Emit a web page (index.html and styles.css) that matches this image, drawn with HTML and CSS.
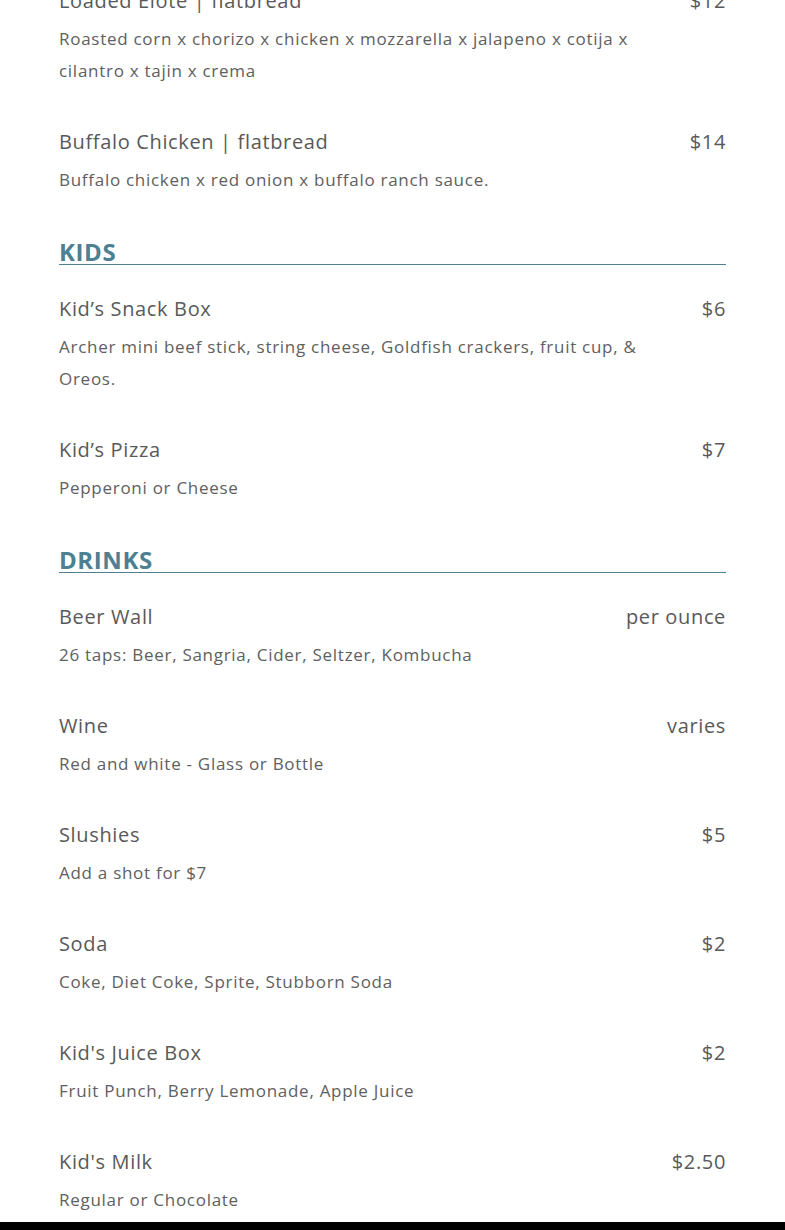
FILE: index.html
```html
<!DOCTYPE html>
<html lang="en">
<head>
<meta charset="utf-8">
<title>Menu</title>
<link rel="stylesheet" href="styles.css">
</head>
<body>
<main class="menu">
  <section class="menu-section">
    <div class="item">
      <div class="item-head"><h3 class="item-name">Loaded Elote | flatbread</h3><span class="item-price">$12</span></div>
      <p class="item-desc">Roasted corn x chorizo x chicken x mozzarella x jalapeno x cotija x cilantro x tajin x crema</p>
    </div>
    <div class="item">
      <div class="item-head"><h3 class="item-name">Buffalo Chicken | flatbread</h3><span class="item-price">$14</span></div>
      <p class="item-desc">Buffalo chicken x red onion x buffalo ranch sauce.</p>
    </div>
  </section>

  <section class="menu-section">
    <h2 class="section-title">KIDS</h2>
    <div class="item">
      <div class="item-head"><h3 class="item-name">Kid’s Snack Box</h3><span class="item-price">$6</span></div>
      <p class="item-desc">Archer mini beef stick, string cheese, Goldfish crackers, fruit cup, &amp; Oreos.</p>
    </div>
    <div class="item">
      <div class="item-head"><h3 class="item-name">Kid’s Pizza</h3><span class="item-price">$7</span></div>
      <p class="item-desc">Pepperoni or Cheese</p>
    </div>
  </section>

  <section class="menu-section">
    <h2 class="section-title">DRINKS</h2>
    <div class="item">
      <div class="item-head"><h3 class="item-name">Beer Wall</h3><span class="item-price">per ounce</span></div>
      <p class="item-desc">26 taps: Beer, Sangria, Cider, Seltzer, Kombucha</p>
    </div>
    <div class="item">
      <div class="item-head"><h3 class="item-name">Wine</h3><span class="item-price">varies</span></div>
      <p class="item-desc">Red and white - Glass or Bottle</p>
    </div>
    <div class="item">
      <div class="item-head"><h3 class="item-name">Slushies</h3><span class="item-price">$5</span></div>
      <p class="item-desc">Add a shot for $7</p>
    </div>
    <div class="item">
      <div class="item-head"><h3 class="item-name">Soda</h3><span class="item-price">$2</span></div>
      <p class="item-desc">Coke, Diet Coke, Sprite, Stubborn Soda</p>
    </div>
    <div class="item">
      <div class="item-head"><h3 class="item-name">Kid's Juice Box</h3><span class="item-price">$2</span></div>
      <p class="item-desc">Fruit Punch, Berry Lemonade, Apple Juice</p>
    </div>
    <div class="item">
      <div class="item-head"><h3 class="item-name">Kid's Milk</h3><span class="item-price">$2.50</span></div>
      <p class="item-desc">Regular or Chocolate</p>
    </div>
  </section>
</main>
<footer class="footer-bar"></footer>
</body>
</html>
```
FILE: styles.css
```css
* { box-sizing: border-box; }
html, body { margin: 0; padding: 0; background: #fff; }
body {
  font-family: "Open Sans", "Noto Sans", sans-serif;
  color: #5a5a5a;
}
.menu {
  margin-top: -15px;
  padding: 0 59px 6px;
  display: flex;
  flex-direction: column;
  gap: 41px;
}
.menu-section {
  display: flex;
  flex-direction: column;
  gap: 39px;
}
.section-title {
  margin: 3px 0 -11px;
  font-size: 24px;
  line-height: 24px;
  font-weight: 700;
  color: #4d8091;
  letter-spacing: 0.6px;
  border-bottom: 1px solid #4d8091;
}
.item { display: flex; flex-direction: column; gap: 6px; }
.item-head {
  display: flex;
  justify-content: space-between;
  align-items: center;
}
.item-name, .item-price {
  margin: 0;
  font-size: 20px;
  line-height: 32px;
  font-weight: 400;
  letter-spacing: 0.65px;
  color: #595959;
}
.item-desc {
  margin: 0;
  max-width: 600px;
  font-size: 17px;
  line-height: 32px;
  letter-spacing: 0.72px;
  color: #606060;
}
.footer-bar {
  height: 200px;
  background: #000;
}
```
